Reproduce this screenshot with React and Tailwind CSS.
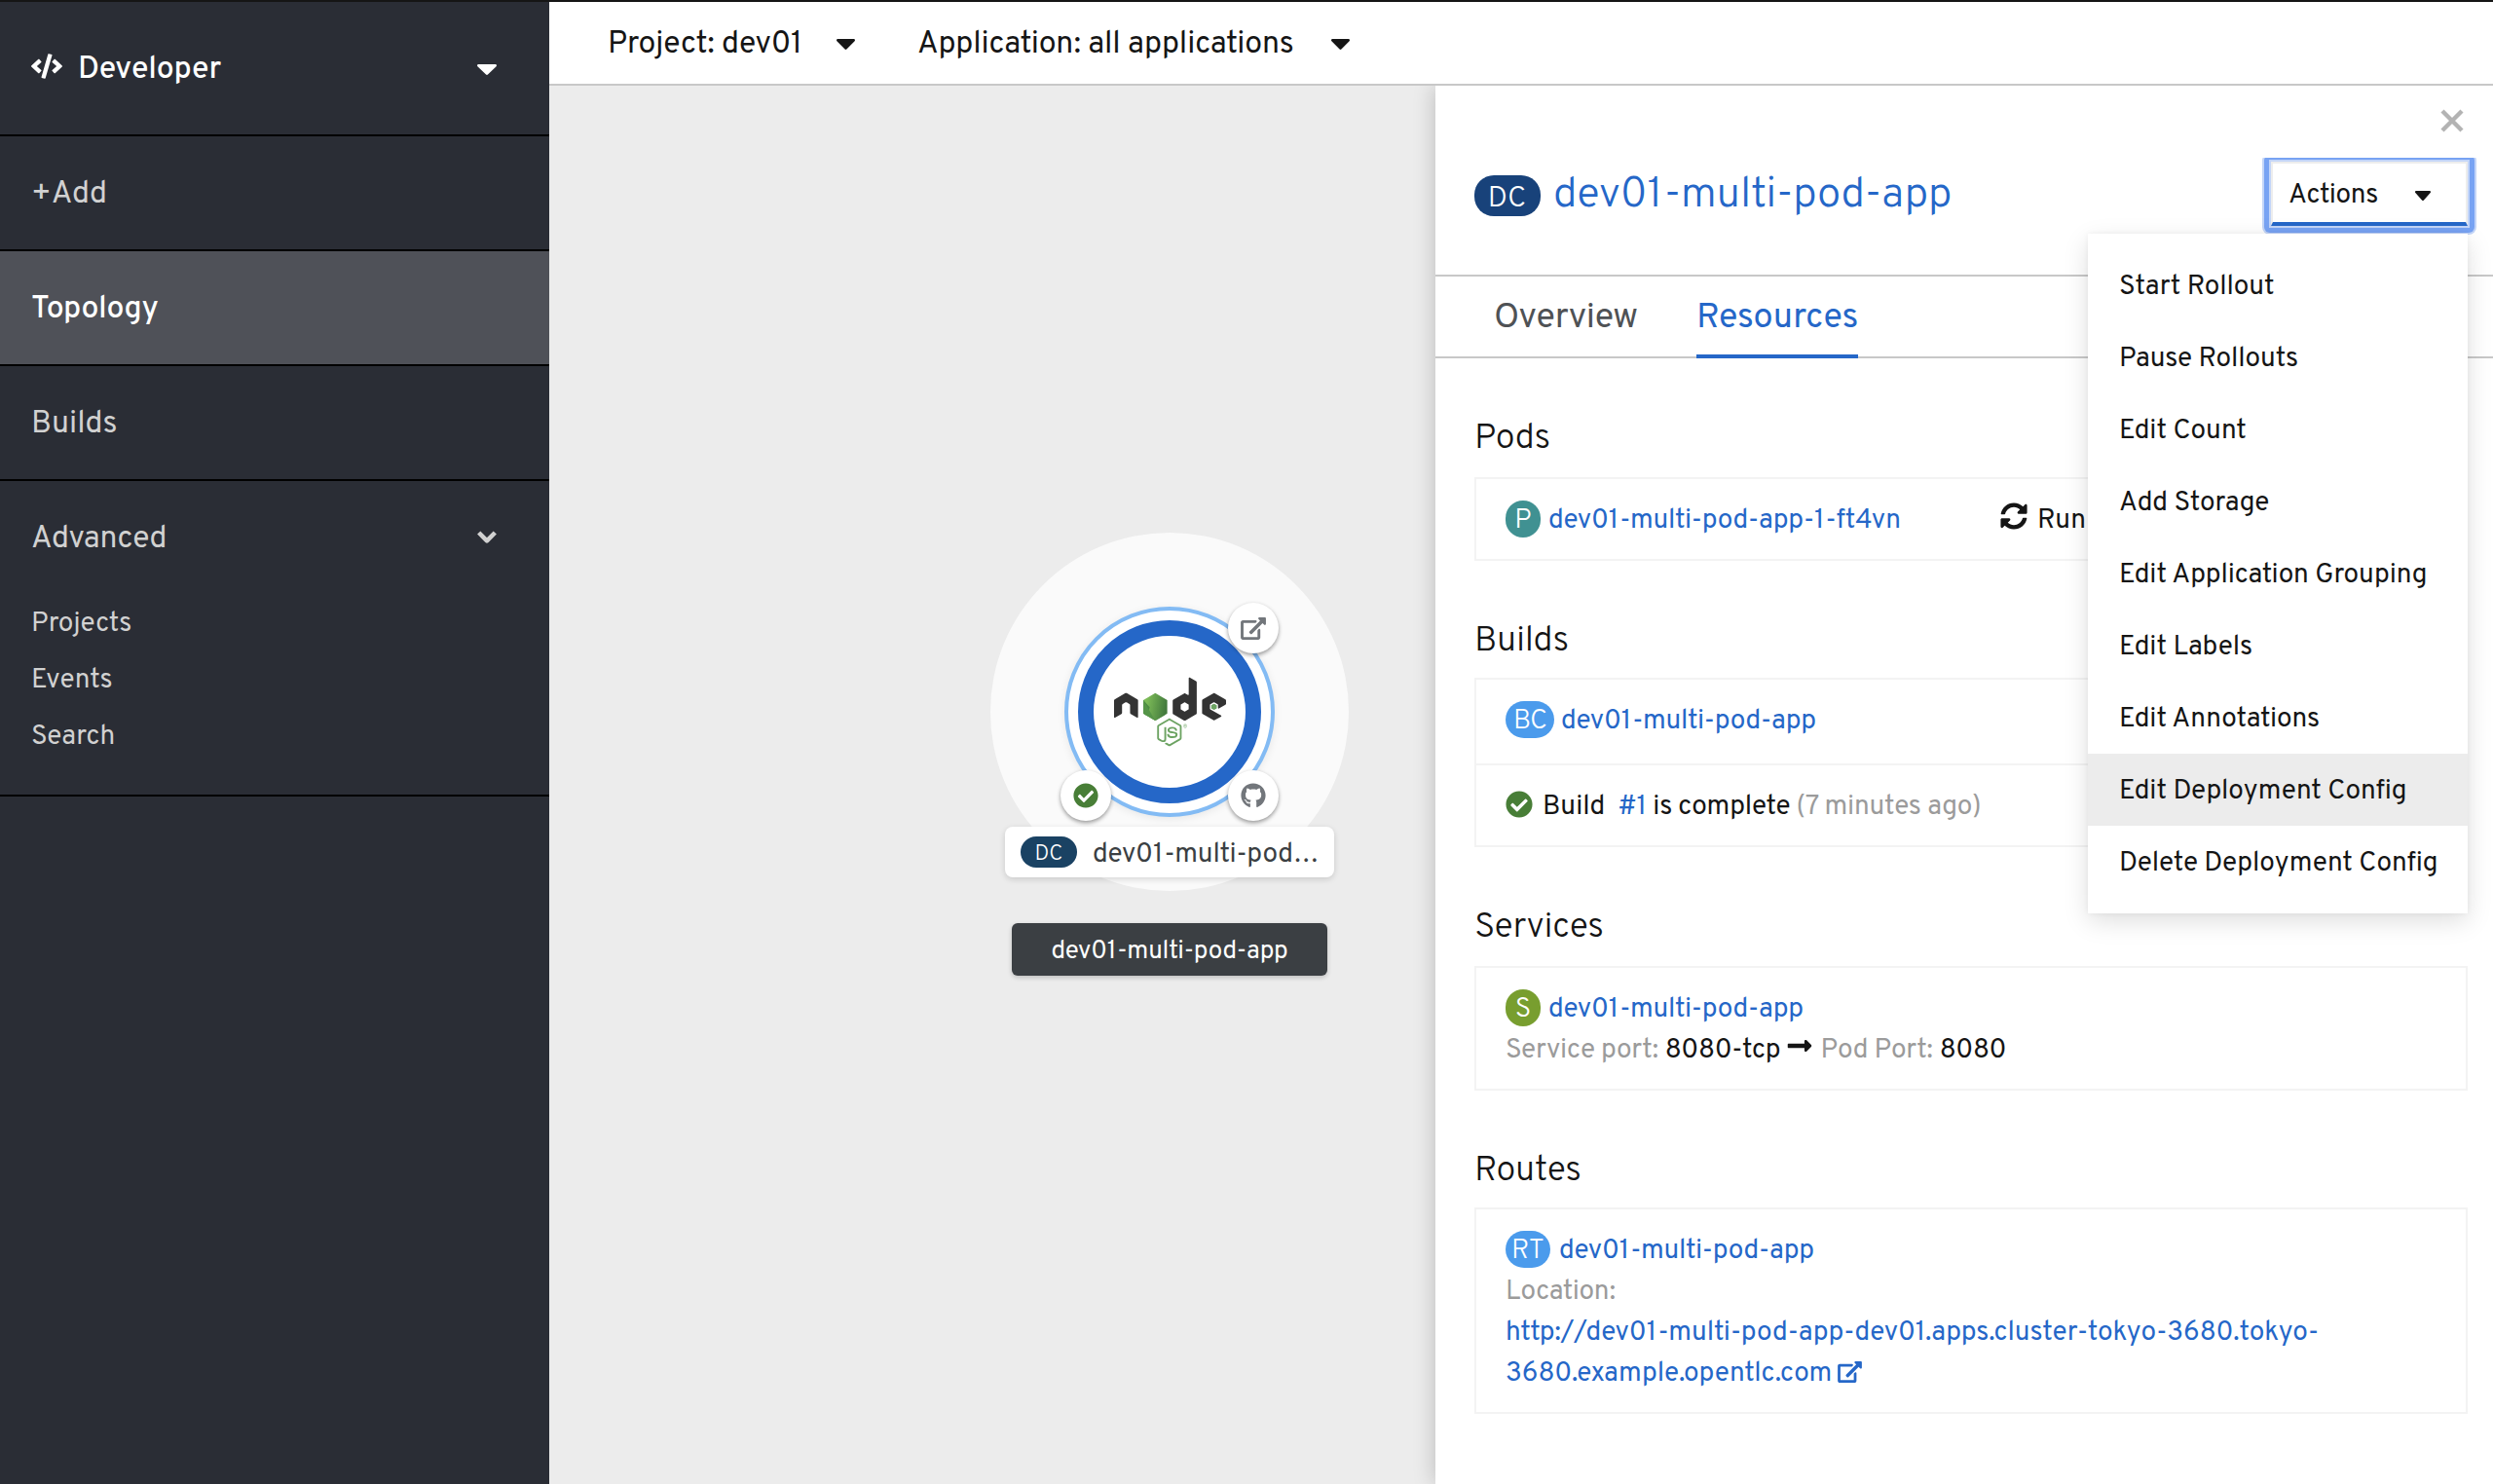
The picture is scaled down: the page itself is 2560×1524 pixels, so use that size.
import React from "react";
import {
  FaCheckCircle,
  FaCode,
  FaGithub,
  FaLongArrowAltRight,
  FaNode,
  FaSyncAlt,
} from "react-icons/fa";

function Caret({ className }) {
  return (
    <svg viewBox="11 192 298 169" preserveAspectRatio="none" fill="currentColor" className={className}>
      <path d="M31.3 192h257.3c17.8 0 26.7 21.5 14.1 34.1L174.1 354.8c-7.8 7.8-20.5 7.8-28.3 0L17.2 226.1C4.6 213.5 13.5 192 31.3 192z" />
    </svg>
  );
}

function ExternalLink({ className }) {
  return (
    <svg viewBox="0 0 576 512" fill="currentColor" className={className}>
      <path d="M576 24v127.984c0 21.461-25.96 31.98-40.971 16.971l-35.707-35.709-243.523 243.523c-9.373 9.373-24.568 9.373-33.941 0l-22.627-22.627c-9.373-9.373-9.373-24.569 0-33.941L442.756 76.676l-35.703-35.705C391.982 25.9 402.656 0 424.024 0H552c13.255 0 24 10.745 24 24zM407.029 270.794l-16 16A23.999 23.999 0 0 0 384 303.765V448H64V128h264a24.003 24.003 0 0 0 16.97-7.029l16-16C376.089 89.851 365.381 64 344 64H48C21.49 64 0 85.49 0 112v352c0 26.51 21.49 48 48 48h352c26.51 0 48-21.49 48-48V287.764c0-21.382-25.852-32.09-40.971-16.97z" />
    </svg>
  );
}

function NodeLogo({ className }) {
  return (
    <svg viewBox="0 0 640 512" className={className}>
      <defs>
        <clipPath id="node-dark">
          <path d="M0 0H150V512H0ZM320 0H640V318H392L320 278Z" />
        </clipPath>
        <clipPath id="node-js">
          <path d="M150 270H318L392 318H640V512H150Z" />
        </clipPath>
        <linearGradient id="node-hex" x1="0" y1="0" x2="1" y2="0.2">
          <stop offset="0.2" stopColor="#7dbb58" />
          <stop offset="1" stopColor="#437b3d" />
        </linearGradient>
      </defs>
      <g clipPath="url(#node-dark)" className="text-[#333333]">
        <FaNode size={640} y={-64} />
      </g>
      <g clipPath="url(#node-js)" className="text-[#6ca362]">
        <FaNode size={640} y={-64} />
      </g>
      <path d="M235.5 149 304 189V266L235.5 306 167 266V189Z" fill="url(#node-hex)" />
      <path d="M167 189V266L190 279 204 230Z" fill="#4c8b43" />
      <path d="M167 189 235.5 306 190 279 167 266Z" fill="#559448" />
      <path d="M571 210 587 219V236L571 245 555 236V219Z" fill="#6ca362" />
    </svg>
  );
}

const navItems = [
  { label: "+Add", active: false },
  { label: "Topology", active: true },
  { label: "Builds", active: false },
];

function Sidebar() {
  return (
    <nav className="flex w-[564px] shrink-0 flex-col bg-[#2a2d35] text-[32px] leading-[48px] text-[#d1d1d1]">
      <div className="flex h-[138px] items-start border-b-2 border-black pr-[54px] pl-8 pt-[46px] text-white">
        <FaCode className="mt-1 h-[32px] w-8" />
        <span className="ml-4 font-medium tracking-[-0.003em]">Developer</span>
        <Caret className="mt-[18px] ml-auto h-[11px] w-5" />
      </div>
      {navItems.map(({ label, active }) => (
        <div
          key={label}
          className={
            active
              ? "h-[118px] border-b-2 border-black bg-[#4f5158] px-8 pt-9 font-medium tracking-[-0.01em] text-white"
              : "h-[118px] border-b-2 border-black px-8 pt-9"
          }
        >
          {label}
        </div>
      ))}
      <div className="border-b-2 border-black pb-[22px]">
        <div className="flex h-[126px] items-start justify-between pr-[54px] pl-8 pt-9">
          <span className="tracking-[-0.015em]">Advanced</span>
          <svg viewBox="0 0 20 14" className="mt-[15px] h-[14px] w-5" fill="none" stroke="currentColor" strokeWidth="4.6">
            <path d="M1.7 2 10 10.4 18.3 2" strokeLinejoin="round" />
          </svg>
        </div>
        {["Projects", "Events", "Search"].map((label) => (
          <div key={label} className="h-[58px] px-8 text-[28px] leading-[42px]">
            {label}
          </div>
        ))}
      </div>
    </nav>
  );
}

function Header() {
  return (
    <header className="relative z-10 flex h-[86px] items-start border-b-2 border-[#c8c8c8] bg-white pt-[20px] pl-[60px] text-[32px] leading-[48px]">
      <span className="tracking-[-0.0035em]">Project: dev01</span>
      <Caret className="mt-[18px] ml-[35px] h-[11px] w-[19px]" />
      <span className="ml-[64px] tracking-[-0.0035em]">Application: all applications</span>
      <Caret className="mt-[18px] ml-[38px] h-[11px] w-[19px]" />
    </header>
  );
}

function Decorator({ className, children }) {
  return (
    <div
      className={`absolute flex h-[52px] w-[52px] items-center justify-center rounded-full bg-white shadow-[0_2px_4px_rgba(0,0,0,0.4)] ${className}`}
    >
      {children}
    </div>
  );
}

function Canvas() {
  return (
    <div className="relative w-[910px] shrink-0 overflow-hidden bg-[#ececec]">
      <div className="absolute top-[459px] left-[453px] h-[368px] w-[368px] rounded-full bg-[#fafafa]" />
      <div className="absolute top-[535px] left-[529px] h-[216px] w-[216px] rounded-full border-4 border-[#83bbf4] bg-white shadow-[0_2px_8px_rgba(0,0,0,0.08)]" />
      <div className="absolute top-[549px] left-[543px] flex h-[188px] w-[188px] items-center justify-center rounded-full border-[16px] border-[#2567c8] bg-white">
        <NodeLogo className="h-[92px] w-[115px]" />
      </div>
      <Decorator className="top-[531px] left-[697px] text-[#72767b]">
        <ExternalLink className="h-[23px] w-[26px]" />
      </Decorator>
      <Decorator className="top-[703px] left-[525px] text-[#487e37]">
        <FaCheckCircle size={26} />
      </Decorator>
      <Decorator className="top-[703px] left-[697px] text-[#72767b]">
        <FaGithub size={26} />
      </Decorator>
      <div className="absolute top-[761px] left-[468px] flex h-[52px] w-[338px] items-start rounded-lg bg-white pt-[10px] pl-4 shadow-[0_2px_6px_rgba(0,0,0,0.15)]">
        <span className="h-8 w-[58px] rounded-full bg-[#1a4263] text-center text-[22px] leading-[38px] font-light text-white">DC</span>
        <span className="ml-4 text-[28px] leading-[38px] tracking-[-0.006em] text-[#3b3f43]">dev01-multi-pod…</span>
      </div>
      <div className="absolute top-[860px] left-[475px] flex h-[54px] w-[324px] items-center justify-center rounded-md bg-[#3b3f43] pt-1 text-[26px] tracking-[-0.008em] text-white shadow-[0_2px_5px_rgba(0,0,0,0.2)]">
        dev01-multi-pod-app
      </div>
    </div>
  );
}

function Badge({ className, children }) {
  return (
    <span className={`h-[38px] shrink-0 rounded-[19px] text-center leading-[42px] font-light text-white ${className}`}>
      {children}
    </span>
  );
}

function Section({ title, titleClass, className, children }) {
  return (
    <section className="pt-14">
      <h3 className={`text-[36px] leading-[54px] font-light tracking-[-0.008em] ${titleClass}`}>{title}</h3>
      <div className={`border-2 border-[#f3f3f3] ${className}`}>{children}</div>
    </section>
  );
}

const link = "tracking-[-0.008em] text-[#2567c8]";
const muted = "text-[#9b9b9b]";

const actions = [
  "Start Rollout",
  "Pause Rollouts",
  "Edit Count",
  "Add Storage",
  "Edit Application Grouping",
  "Edit Labels",
  "Edit Annotations",
  "Edit Deployment Config",
  "Delete Deployment Config",
];

function ActionsMenu() {
  return (
    <div className="relative w-[202px] shrink-0">
      <div className="relative [clip-path:inset(-4px_-10px_-10px_-10px)]">
        <div className="absolute -inset-[7px] rounded-md bg-[#78a3f3] shadow-[0_0_0_2px_#c3d5f8]" />
        <button className="relative flex h-[66px] w-full items-start border-2 border-b-4 border-[#ededed] border-b-[#2567c8] bg-white pt-[12px] pl-4 text-left text-[28px] leading-[42px] shadow-[0_0_0_2px_#c3d5f8]">
          <span className="tracking-[-0.01em]">Actions</span>
          <Caret className="mt-[16px] ml-[38px] h-[10px] w-4" />
        </button>
      </div>
      <ul className="absolute top-[74px] right-0 z-20 w-[390px] bg-white py-4 text-[28px] leading-[42px] shadow-[0_8px_24px_rgba(3,3,3,0.13),0_0_6px_rgba(3,3,3,0.05)]">
        {actions.map((label) => (
          <li
            key={label}
            className={
              label === "Edit Deployment Config"
                ? "h-[74px] bg-[#ececec] px-8 pt-[18px] tracking-[-0.003em] whitespace-nowrap"
                : "h-[74px] px-8 pt-[18px] tracking-[-0.003em] whitespace-nowrap"
            }
          >
            {label}
          </li>
        ))}
      </ul>
    </div>
  );
}

function SidePanel() {
  return (
    <aside className="relative flex-1 bg-white text-[28px] leading-[42px] shadow-[-2px_0_20px_rgba(0,0,0,0.18)]">
      <div className="h-[196px] border-b-2 border-[#c8c8c8] pr-[26px] pl-10">
        <div className="flex h-[78px] justify-end pt-6 pr-1">
          <svg viewBox="0 0 24 24" className="h-6 w-6" stroke="#b3b3b3" strokeWidth="4.4">
            <path d="M2 2 22 22M22 2 2 22" />
          </svg>
        </div>
        <div className="flex items-start">
          <span className="mt-[14px] h-[42px] w-[68px] rounded-[20px] bg-[#18427a] pr-px text-center text-[30px] leading-[50px] font-light text-white">DC</span>
          <h1 className="mt-[2px] ml-[13px] text-[44px] leading-[66px] font-light tracking-[-0.006em] text-[#2567c8]">dev01-multi-pod-app</h1>
          <div className="ml-auto">
            <ActionsMenu />
          </div>
        </div>
      </div>
      <div className="flex h-[84px] gap-[60px] border-b-2 border-[#c8c8c8] pl-[60px] text-[36px] leading-[54px]">
        <div className="w-[148px] pt-4 tracking-[-0.01em] text-[#4f5255]">Overview</div>
        <div className="h-[84px] w-[166px] border-b-4 border-[#2567c8] pt-4 text-[#2567c8]">Resources</div>
      </div>
      <div className="pr-[26px] pl-10">
        <Section title="Pods" titleClass="mb-3" className="flex h-[86px] pt-[22px] pl-[30px]">
          <div className="flex w-[508px] items-start gap-2">
            <Badge className="w-9 bg-[#409192]">P</Badge>
            <span className={link}>dev01-multi-pod-app-1-ft4vn</span>
          </div>
          <FaSyncAlt size={28} className="mt-[2px]" />
          <span className="ml-[10px]">Run</span>
        </Section>
        <Section title="Builds" titleClass="mb-[10px]" className="h-[174px]">
          <div className="flex h-[88px] items-start gap-[7px] border-b-2 border-[#f3f3f3] pt-[22px] pl-[30px]">
            <Badge className="w-[50px] bg-[#4b9bec] tracking-[-0.03em]">BC</Badge>
            <span className={link}>dev01-multi-pod-app</span>
          </div>
          <div className="flex items-start pt-[22px] pl-[30px] whitespace-pre">
            <FaCheckCircle size={28} className="mt-1 text-[#487e37]" />
            <span className="ml-[10px]">Build  <span className="text-[#2567c8]">#1</span></span>
            <span className="tracking-[-0.01em]"> is complete </span>
            <span className={`tracking-[-0.006em] ${muted}`}>(7 minutes ago)</span>
          </div>
        </Section>
        <Section title="Services" titleClass="mb-3" className="h-[128px] pt-[22px] pl-[30px]">
          <div className="flex items-start gap-2">
            <Badge className="w-9 bg-[#789e2f]">S</Badge>
            <span className={link}>dev01-multi-pod-app</span>
          </div>
          <div className="flex items-start tracking-[-0.009em]">
            <span className={muted}>Service port:</span>
            <span className="ml-[7px]">8080-tcp</span>
            <FaLongArrowAltRight size={28} className="mt-[2px] mr-[7px] ml-[6px]" />
            <span className={muted}>Pod Port:</span>
            <span className="ml-[7px]">8080</span>
          </div>
        </Section>
        <Section title="Routes" titleClass="mb-[10px]" className="h-[212px] pt-[22px] pl-[30px]">
          <div className="flex items-start gap-[9px]">
            <Badge className="w-[46px] bg-[#4b9bec]">RT</Badge>
            <span className={link}>dev01-multi-pod-app</span>
          </div>
          <div className={`tracking-[-0.008em] ${muted}`}>Location:</div>
          <div className="tracking-[-0.003em] text-[#2567c8]">http://dev01-multi-pod-app-dev01.apps.cluster-tokyo-3680.tokyo-</div>
          <div className="flex items-start text-[#2567c8]">
            <span className="tracking-[-0.003em]">3680.example.opentlc.com</span>
            <ExternalLink className="mt-2 ml-[6px] h-[22px] w-[25px]" />
          </div>
        </Section>
      </div>
    </aside>
  );
}

export default function App() {
  return (
    <div className="flex h-[1524px] w-[2560px] flex-col overflow-hidden border-t-2 border-[#151515] bg-white font-[Overpass,Roboto,sans-serif] text-[#151515]">
      <div className="flex min-h-0 flex-1">
        <Sidebar />
        <div className="flex min-w-0 flex-1 flex-col">
          <Header />
          <main className="flex min-h-0 flex-1">
            <Canvas />
            <SidePanel />
          </main>
        </div>
      </div>
    </div>
  );
}
